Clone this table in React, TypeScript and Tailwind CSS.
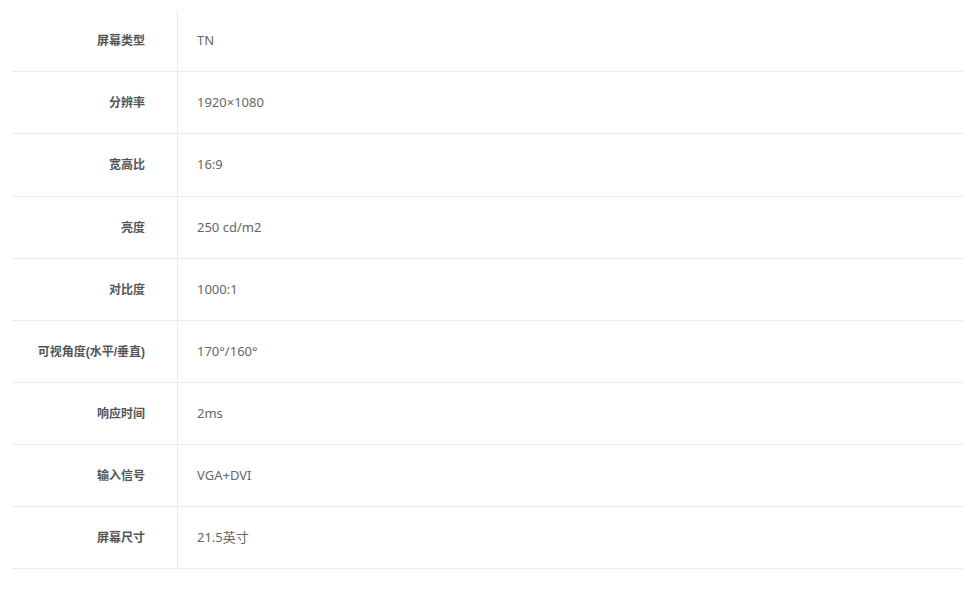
const specs = [
  { label: "屏幕类型", value: "TN" },
  { label: "分辨率", value: "1920×1080" },
  { label: "宽高比", value: "16:9" },
  { label: "亮度", value: "250 cd/m2" },
  { label: "对比度", value: "1000:1" },
  { label: "可视角度(水平/垂直)", value: "170°/160°" },
  { label: "响应时间", value: "2ms" },
  { label: "输入信号", value: "VGA+DVI" },
  { label: "屏幕尺寸", value: "21.5英寸" },
];

export default function App() {
  return (
    <div className="w-[980px] h-[591px] bg-white pt-[10px] pl-[12px] font-['Noto_Sans','Noto_Sans_CJK_SC',sans-serif]">
      <div className="w-[951px]">
        {specs.map((s, i) => (
          <div
            key={s.label}
            className={`flex border-b border-[#ebebeb] ${i === 2 ? "h-[63px]" : "h-[62px]"}`}
          >
            <div className="w-[166px] shrink-0 flex items-center justify-end pr-[32px] border-r border-[#ebebeb] text-[12px] font-bold text-[#555] font-['Liberation_Sans','Noto_Sans_CJK_SC',sans-serif]">
              {s.label}
            </div>
            <div className="flex-1 flex items-center pl-[19px] text-[13px] text-[#666]">
              {s.value}
            </div>
          </div>
        ))}
      </div>
    </div>
  );
}
